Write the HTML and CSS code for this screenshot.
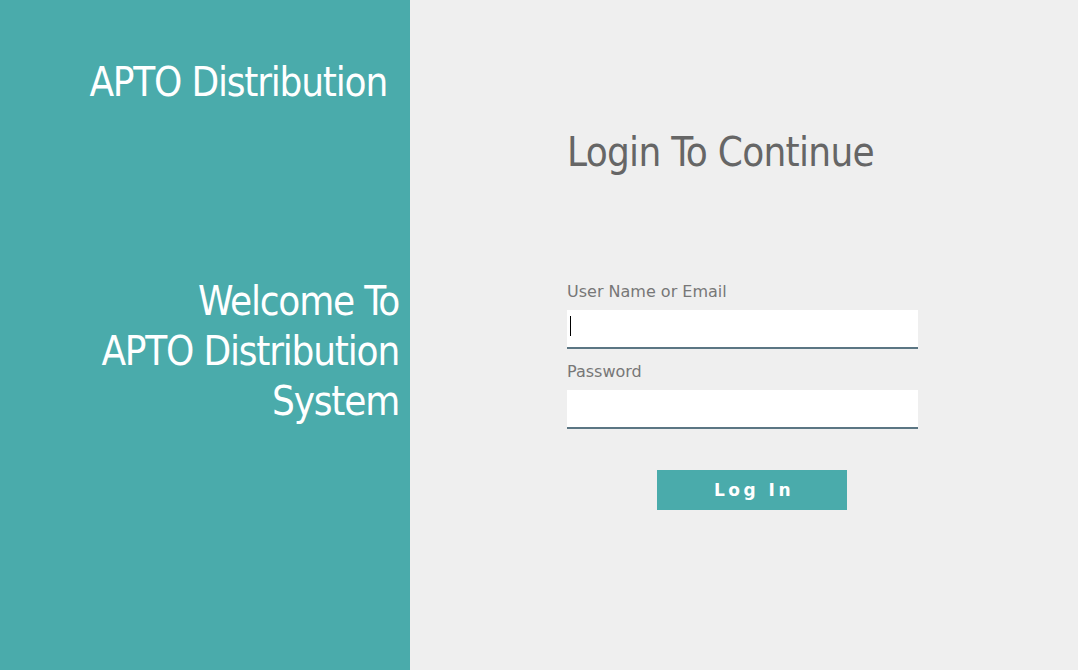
FILE: index.html
```html
<!DOCTYPE html>
<html>
<head>
<meta charset="utf-8">
<link rel="stylesheet" href="styles.css">
</head>
<body>
<div class="page">
  <aside class="side">
    <div class="brand">APTO Distribution</div>
    <div class="welcome">Welcome To<br>APTO Distribution<br>System</div>
  </aside>
  <main class="main">
    <h1 class="title">Login To Continue</h1>
    <form class="form">
      <label class="label" for="user">User Name or Email</label>
      <div class="field"><span class="caret"></span><input class="input" id="user" type="text"></div>
      <label class="label" for="pass">Password</label>
      <div class="field"><input class="input" id="pass" type="password"></div>
      <div class="actions"><button class="btn" type="button">Log In</button></div>
    </form>
  </main>
</div>
</body>
</html>
```
FILE: styles.css
```css
html, body { margin: 0; padding: 0; }
body { background: #efefef; font-family: "DejaVu Sans", sans-serif; }
.page { display: flex; width: 1078px; height: 670px; }
.side {
  width: 410px; background: #4aabab; color: #fff;
  display: flex; flex-direction: column; align-items: flex-end;
  box-sizing: border-box; padding-top: 58px;
}
.brand { font-size: 40px; line-height: 48px; margin-right: 23px; font-stretch: condensed; letter-spacing: -1.2px; }
.welcome { font-size: 40px; line-height: 50px; text-align: right; margin-top: 170px; margin-right: 11px; font-stretch: condensed; letter-spacing: -1.2px; }
.main { flex: 1; padding-left: 157px; }
.title { font-weight: normal; font-size: 40px; color: #666; margin: 126px 0 0 0; line-height: 52px; font-stretch: condensed; letter-spacing: -0.7px; }
.form { display: flex; flex-direction: column; width: 351px; margin-top: 105px; }
.label { font-family: "DejaVu Sans", sans-serif; font-size: 16px; color: #777; height: 27px; line-height: 18px; }
.field { position: relative; margin: 0 0 14px 0; }
.input {
  display: block; width: 100%;
  height: 39px; box-sizing: border-box; border: none; border-bottom: 2px solid #5b7683;
  background: #fff; padding: 0 4px; outline: none; font-size: 16px;
}
.caret { position: absolute; left: 3px; top: 6px; width: 1px; height: 20px; background: #000; }
.actions { display: flex; justify-content: center; margin-top: 27px; padding-left: 19px; }
.btn {
  width: 190px; height: 40px; background: #4aabab; color: #fff; border: none;
  font-family: "DejaVu Sans", sans-serif; font-weight: bold; font-size: 17px; letter-spacing: 3.5px;
  padding: 0 0 0 4px;
}
```
